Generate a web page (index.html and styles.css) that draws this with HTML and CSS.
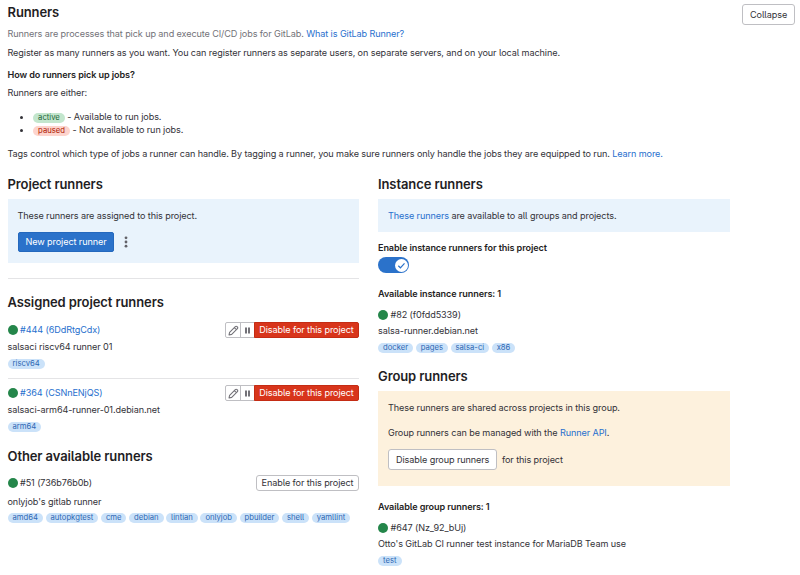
FILE: index.html
```html
<!DOCTYPE html>
<html lang="en">
<head>
<meta charset="utf-8">
<title>Runners</title>
<link rel="stylesheet" href="styles.css">
</head>
<body>
<svg class="defs" width="0" height="0" aria-hidden="true">
  <symbol id="pencil" viewBox="0 0 11 11"><path d="M1 10l.6-2.700L7.300 1.600a1.200 1.200 0 0 1 1.700 0l.4.4a1.200 1.200 0 0 1 0 1.700L3.700 9.400zM6.300 2.600l2.100 2.100" fill="none" stroke="currentColor" stroke-width="1.100" stroke-linejoin="round"/></symbol>
  <symbol id="pause" viewBox="0 0 9 9"><path d="M2 1.500h2v6H2zM5 1.500h2v6H5z" fill="currentColor"/></symbol>
</svg>
<header class="header">
  <h2>Runners</h2>
  <button class="btn">Collapse</button>
</header>
<section class="intro">
  <p class="muted">Runners are processes that pick up and execute CI/CD jobs for GitLab. <a href="#">What is GitLab Runner?</a></p>
  <p class="register">Register as many runners as you want. You can register runners as separate users, on separate servers, and on your local machine.</p>
  <p class="strong how">How do runners pick up jobs?</p>
  <p class="either">Runners are either:</p>
  <ul>
    <li><span class="badge green">active</span> - Available to run jobs.</li>
    <li><span class="badge red">paused</span> - Not available to run jobs.</li>
  </ul>
  <p>Tags control which type of jobs a runner can handle. By tagging a runner, you make sure runners only handle the jobs they are equipped to run. <a href="#">Learn more.</a></p>
</section>
<main class="columns">
  <section>
    <h2>Project runners</h2>
    <div class="panel blue project">
      <p>These runners are assigned to this project.</p>
      <div class="actions">
        <button class="btn primary">New project runner</button>
        <svg class="dots" width="4" height="12" viewBox="0 0 4 12"><circle cx="2" cy="1.800" r="1.400"/><circle cx="2" cy="6" r="1.400"/><circle cx="2" cy="10.200" r="1.400"/></svg>
      </div>
    </div>
    <hr>
    <h2 class="assigned">Assigned project runners</h2>
    <article class="runner first">
      <div class="row"><i class="status"></i><a href="#">#444 (6DdRtgCdx)</a>
        <div class="group"><button class="icon"><svg width="11" height="11"><use href="#pencil"/></svg></button><button class="icon"><svg width="9" height="9"><use href="#pause"/></svg></button><button class="danger">Disable for this project</button></div></div>
      <p>salsaci riscv64 runner 01</p>
      <div class="tags"><span class="badge">riscv64</span></div>
    </article>
    <article class="runner second">
      <div class="row"><i class="status"></i><a href="#">#364 (CSNnENjQS)</a>
        <div class="group"><button class="icon"><svg width="11" height="11"><use href="#pencil"/></svg></button><button class="icon"><svg width="9" height="9"><use href="#pause"/></svg></button><button class="danger">Disable for this project</button></div></div>
      <p>salsaci-arm64-runner-01.debian.net</p>
      <div class="tags"><span class="badge">arm64</span></div>
    </article>
    <h2 class="other">Other available runners</h2>
    <article class="runner third">
      <div class="row"><i class="status"></i><span>#51 (736b76b0b)</span><button class="btn small">Enable for this project</button></div>
      <p>onlyjob's gitlab runner</p>
      <div class="tags"><span class="badge">amd64</span><span class="badge">autopkgtest</span><span class="badge">cme</span><span class="badge">debian</span><span class="badge">lintian</span><span class="badge">onlyjob</span><span class="badge">pbuilder</span><span class="badge">shell</span><span class="badge">yamllint</span></div>
    </article>
  </section>
  <section>
    <h2>Instance runners</h2>
    <div class="panel blue instance"><p><a href="#">These runners</a> are available to all groups and projects.</p></div>
    <p class="strong enable">Enable instance runners for this project</p>
    <div class="toggle"><span class="knob"><svg width="9" height="9" viewBox="0 0 9 9"><path d="M1.300 4.800l2.100 2L7.500 2.300" fill="none" stroke="#2b72ca" stroke-width="1.200"/></svg></span></div>
    <p class="strong available">Available instance runners: 1</p>
    <article class="runner compact">
      <div class="row"><i class="status"></i><span>#82 (f0fdd5339)</span></div>
      <p>salsa-runner.debian.net</p>
      <div class="tags"><span class="badge">docker</span><span class="badge">pages</span><span class="badge">salsa-ci</span><span class="badge">x86</span></div>
    </article>
    <h2 class="grouphead">Group runners</h2>
    <div class="panel orange">
      <p>These runners are shared across projects in this group.</p>
      <p class="manage">Group runners can be managed with the <a href="#">Runner API</a>.</p>
      <div class="actions"><button class="btn">Disable group runners</button><span>for this project</span></div>
    </div>
    <p class="strong available">Available group runners: 1</p>
    <article class="runner compact">
      <div class="row"><i class="status"></i><span>#647 (Nz_92_bUj)</span></div>
      <p>Otto's GitLab CI runner test instance for MariaDB Team use</p>
      <div class="tags"><span class="badge">test</span></div>
    </article>
  </section>
</main>
</body>
</html>
```
FILE: styles.css
```css
* { box-sizing: border-box; }
body {
  margin: 0;
  padding: 3px 5px 0 7.500px;
  background: #fff;
  color: #333238;
  font: 9.100px/14px Inter, "Liberation Sans", sans-serif;
  letter-spacing: -0.100px;
  font-feature-settings: "cv05";
  white-space: nowrap;
}
h2, p, ul { margin: 0; }
h2 { font-size: 13px; line-height: 20px; font-weight: 600; color: #1f1e24; }
a { color: #2870ce; text-decoration: none; }
button { font: inherit; font-feature-settings: inherit; letter-spacing: inherit; color: inherit; margin: 0; padding: 0; }
.defs { display: block; }
.strong { font-weight: 600; color: #1f1e24; }
.muted { color: #737278; }
.header { display: flex; justify-content: space-between; height: 24px; }
.header h2 { line-height: 19px; }
.btn { height: 21px; padding: 0 7px; background: #fff; border: 1px solid #bfbfc3; border-radius: 3px; }
.header .btn { margin-top: 1px; width: 53px; }
.register { margin-top: 5px; }
.how { margin-top: 8px; }
.either { margin-top: 4px; }
.intro ul { margin: 10px 0 11px; padding-left: 25.600px; }
.intro li { line-height: 13px; }
.intro li::marker { font-size: 10px; }
.badge { display: inline-block; height: 10px; padding: 0 5px; border-radius: 5px; background: #cbe2f9; color: #2f68b4; font-size: 7.700px; line-height: 10px; letter-spacing: 0; }
.green { background: #c3e6cd; color: #24663b; }
.red { background: #fdd4cd; color: #ae1800; }
.columns { display: grid; grid-template-columns: 351.500px 352px; column-gap: 19px; margin-top: 13px; }
.panel { margin-top: 5px; padding: 10px; }
.blue { background: #e9f3fc; }
.orange { background: #fdf1dd; height: 95px; }
.project { height: 64px; }
.instance { height: 33px; }
.actions { display: flex; align-items: center; margin-top: 9px; }
.primary { width: 96px; height: 20px; background: #2b72ca; border-color: #2468bd; border-radius: 2px; color: #fff; }
.dots { margin-left: 10.500px; fill: #626168; }
hr { margin: 15px 0 0; border: 0; border-top: 1px solid #e4e4e6; }
.assigned { margin-top: 13px; }
.row { display: flex; align-items: center; height: 16px; }
.status { width: 10px; height: 10px; margin-right: 2.500px; border-radius: 50%; background: #24864a; }
.first { margin-top: 10px; padding-bottom: 9px; }
.second { border-top: 1px solid #e4e4e6; padding-top: 6px; }
.runner p { margin-top: 2px; }
.tags { display: flex; gap: 2.500px; margin-top: 5px; }
.group { display: flex; margin-left: auto; height: 16px; }
.icon { display: flex; align-items: center; justify-content: center; width: 15px; height: 16px; margin-right: -1px; border: 1px solid #bfbfc3; background: #fff; color: #737278; }
.icon:first-child { width: 16px; border-radius: 2px 0 0 2px; }
.danger { position: relative; width: 105px; height: 16px; border: 1px solid #c42c14; background: #d8351b; color: #fff; border-radius: 0 2px 2px 0; line-height: 14px; }
.other { margin-top: 14px; }
.third { margin-top: 9px; }
.third p { margin-top: 4px; }
.third .tags { margin-top: 4px; }
.small { width: 103px; height: 16px; margin-left: auto; line-height: 14px; padding: 0; }
.enable { margin-top: 9px; }
.toggle { display: flex; justify-content: flex-end; width: 31px; height: 16px; margin-top: 2px; padding: 1.500px; border-radius: 8px; background: #2b72ca; }
.knob { display: flex; align-items: center; justify-content: center; width: 13px; height: 13px; border-radius: 50%; background: #fff; }
.available { margin-top: 14px; }
.compact { margin-top: 6px; }
.compact p { margin-top: 1px; }
.compact .tags { margin-top: 5px; }
.grouphead { margin-top: 13px; }
.manage { margin-top: 11px; }
.orange .btn { width: 109px; margin-right: 5px; }
```
